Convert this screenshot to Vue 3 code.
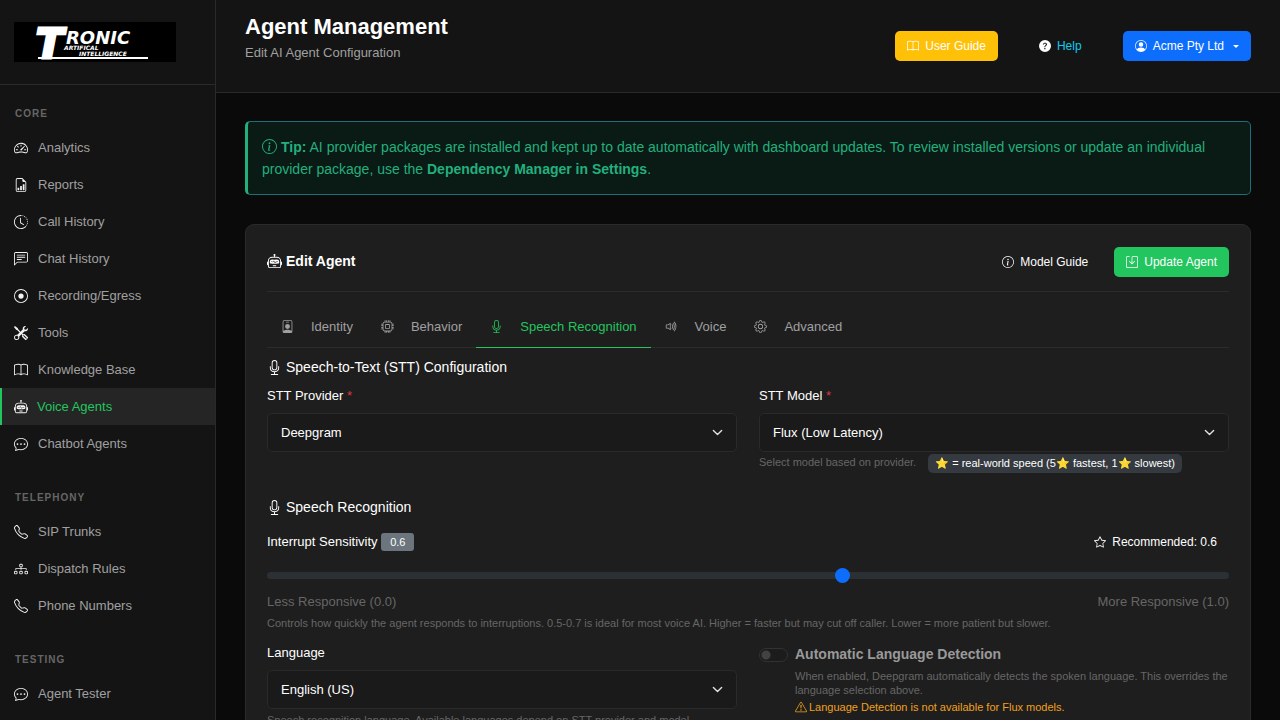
<template>
      <div class="layout">
            <aside class="sidebar">
                  <div class="brand">
                        <svg class="logo" viewBox="0 0 162 40" role="img" aria-label="Tronic Artifical Intelligence">
                              <rect width="162" height="40" fill="#000" />
                              <text class="logo-initial" x="22" y="36">T</text>
                              <text class="logo-name" x="52" y="22">RONIC</text>
                              <text class="logo-small" x="50" y="28">ARTIFICAL</text>
                              <text class="logo-small" x="65" y="34">INTELLIGENCE</text>
                              <rect x="24" y="35" width="110" height="2" fill="#fff" />
                        </svg>
                  </div>
                  <nav class="nav">
                        <div class="nav-group" v-for="group in groups" :key="group.title">
                              <div class="nav-title">{{ group.title }}</div>
                              <a class="nav-link" href="#" v-for="item in group.items" :key="item.label"
                                    :class="{ active: item.label === activePage }" @click.prevent="activePage = item.label">
                                    <svg class="icon nav-icon" viewBox="0 0 16 16"><path :d="icons[item.icon]" fill-rule="evenodd" /></svg>
                                    <span>{{ item.label }}</span>
                              </a>
                        </div>
                  </nav>
            </aside>

            <div class="main">
                  <header class="topbar">
                        <div>
                              <h1 class="page-title">Agent Management</h1>
                              <div class="page-subtitle">Edit AI Agent Configuration</div>
                        </div>
                        <div class="topbar-actions">
                              <a href="#" class="btn btn-warning">
                                    <svg class="icon" viewBox="0 0 16 16"><path :d="icons.book" fill-rule="evenodd" /></svg>User Guide
                              </a>
                              <a href="#" class="btn btn-help">
                                    <svg class="icon" viewBox="0 0 16 16"><path :d="icons.question" /></svg>Help
                              </a>
                              <button type="button" class="btn btn-primary">
                                    <svg class="icon" viewBox="0 0 16 16"><path :d="icons.person" fill-rule="evenodd" /></svg>Acme Pty Ltd
                                    <span class="caret"></span>
                              </button>
                        </div>
                  </header>

                  <main class="content">
                        <div class="alert">
                              <svg class="icon alert-icon" viewBox="0 0 16 16"><path :d="icons.info" /></svg>
                              <strong>Tip:</strong> AI provider packages are installed and kept up to date automatically with dashboard updates. To review installed versions or update an individual provider package, use the <strong>Dependency Manager in Settings</strong>.
                        </div>

                        <section class="card">
                              <div class="card-header">
                                    <h2 class="card-title">
                                          <svg class="icon" viewBox="0 0 16 16"><path :d="icons.robot" fill-rule="evenodd" /></svg>Edit Agent
                                    </h2>
                                    <div class="card-actions">
                                          <button type="button" class="btn">
                                                <svg class="icon" viewBox="0 0 16 16"><path :d="icons.info" /></svg>Model Guide
                                          </button>
                                          <button type="button" class="btn btn-success">
                                                <svg class="icon" viewBox="0 0 16 16"><path :d="icons.save" /></svg>Update Agent
                                          </button>
                                    </div>
                              </div>

                              <div class="tabs">
                                    <button type="button" class="tab" v-for="tab in tabs" :key="tab.label"
                                          :class="{ active: tab.label === activeTab }" @click="activeTab = tab.label">
                                          <svg class="icon" viewBox="0 0 16 16"><path :d="icons[tab.icon]" fill-rule="evenodd" /></svg>{{ tab.label }}
                                    </button>
                              </div>

                              <h3 class="section-title">
                                    <svg class="icon" viewBox="0 0 16 16"><path :d="icons.mic" /></svg>Speech-to-Text (STT) Configuration
                              </h3>
                              <div class="row">
                                    <div>
                                          <label class="label" for="provider">STT Provider <span class="required">*</span></label>
                                          <select id="provider" class="select" v-model="provider">
                                                <option>Deepgram</option>
                                          </select>
                                    </div>
                                    <div>
                                          <label class="label" for="model">STT Model <span class="required">*</span></label>
                                          <select id="model" class="select" v-model="model">
                                                <option>Flux (Low Latency)</option>
                                          </select>
                                          <div class="model-hint">
                                                <span>Select model based on provider.</span>
                                                <span class="speed-badge">⭐ = real-world speed (5⭐ fastest, 1⭐ slowest)</span>
                                          </div>
                                    </div>
                              </div>

                              <h3 class="section-title spaced">
                                    <svg class="icon" viewBox="0 0 16 16"><path :d="icons.mic" /></svg>Speech Recognition
                              </h3>
                              <div class="sensitivity">
                                    <label for="sensitivity">Interrupt Sensitivity <span class="value-badge">{{ sensitivity }}</span></label>
                                    <button type="button" class="btn" @click="sensitivity = 0.6">
                                          <svg class="icon" viewBox="0 0 16 16"><path :d="icons.star" /></svg>Recommended: 0.6
                                    </button>
                              </div>
                              <input id="sensitivity" class="range" type="range" min="0" max="1" step="0.1" v-model="sensitivity">
                              <div class="range-labels">
                                    <span>Less Responsive (0.0)</span>
                                    <span>More Responsive (1.0)</span>
                              </div>
                              <div class="hint">Controls how quickly the agent responds to interruptions. 0.5-0.7 is ideal for most voice AI. Higher = faster but may cut off caller. Lower = more patient but slower.</div>

                              <div class="row language-row">
                                    <div>
                                          <label class="label" for="language">Language</label>
                                          <select id="language" class="select" v-model="language">
                                                <option>English (US)</option>
                                          </select>
                                          <div class="hint">Speech recognition language. Available languages depend on STT provider and model.</div>
                                    </div>
                                    <div class="detection">
                                          <input id="detection" class="switch" type="checkbox" disabled>
                                          <div>
                                                <label class="detection-label" for="detection">Automatic Language Detection</label>
                                                <div class="detection-hint">When enabled, Deepgram automatically detects the spoken language. This overrides the language selection above.</div>
                                                <div class="detection-warning">
                                                      <svg class="icon" viewBox="0 0 16 16"><path :d="icons.warning" /></svg>Language Detection is not available for Flux models.
                                                </div>
                                          </div>
                                    </div>
                              </div>
                        </section>
                  </main>
            </div>
      </div>
</template>

<script setup>
import { ref } from 'vue';

const icons = {
      speedometer: 'M8 4a.5.5 0 0 1 .5.5V6a.5.5 0 0 1-1 0V4.5A.5.5 0 0 1 8 4M3.732 5.732a.5.5 0 0 1 .707 0l.915.914a.5.5 0 1 1-.708.708l-.914-.915a.5.5 0 0 1 0-.707M2 10a.5.5 0 0 1 .5-.5h1.586a.5.5 0 0 1 0 1H2.5A.5.5 0 0 1 2 10m9.5 0a.5.5 0 0 1 .5-.5h1.5a.5.5 0 0 1 0 1H12a.5.5 0 0 1-.5-.5m.754-4.246a.39.39 0 0 0-.527-.02L7.547 9.31a.91.91 0 1 0 1.302 1.258l3.434-4.297a.39.39 0 0 0-.029-.518zM0 10a8 8 0 1 1 15.547 2.661c-.442 1.253-1.845 1.602-2.932 1.25C11.309 13.488 9.475 13 8 13c-1.474 0-3.31.488-4.615.911-1.087.352-2.49.003-2.932-1.25A8 8 0 0 1 0 10m8-7a7 7 0 0 0-6.603 9.329c.203.575.923.876 1.68.63C4.397 12.533 6.358 12 8 12s3.604.532 4.923.96c.757.245 1.477-.056 1.68-.631A7 7 0 0 0 8 3',
      report: 'M10 13.5a.5.5 0 0 0 .5.5h1a.5.5 0 0 0 .5-.5v-6a.5.5 0 0 0-.5-.5h-1a.5.5 0 0 0-.5.5zm-2.5.5a.5.5 0 0 1-.5-.5v-4a.5.5 0 0 1 .5-.5h1a.5.5 0 0 1 .5.5v4a.5.5 0 0 1-.5.5zm-3 0a.5.5 0 0 1-.5-.5v-2a.5.5 0 0 1 .5-.5h1a.5.5 0 0 1 .5.5v2a.5.5 0 0 1-.5.5zM14 14V4.5L9.5 0H4a2 2 0 0 0-2 2v12a2 2 0 0 0 2 2h8a2 2 0 0 0 2-2M9.5 3A1.5 1.5 0 0 0 11 4.5h2V14a1 1 0 0 1-1 1H4a1 1 0 0 1-1-1V2a1 1 0 0 1 1-1h5.500z',
      history: 'M8.515 1.019A7 7 0 0 0 8 1V0a8 8 0 0 1 .589.022zm2.004.45a7 7 0 0 0-.985-.299l.219-.976q.576.129 1.126.342zm1.37.71a7 7 0 0 0-.439-.27l.493-.87a8 8 0 0 1 .979.654l-.615.789a7 7 0 0 0-.418-.302zm1.834 1.79a7 7 0 0 0-.653-.796l.724-.69q.406.429.747.91zm.744 1.352a7 7 0 0 0-.214-.468l.893-.45a8 8 0 0 1 .45 1.088l-.95.313a7 7 0 0 0-.179-.483m.53 2.507a7 7 0 0 0-.1-1.025l.985-.17q.1.58.116 1.17zm-.131 1.538q.05-.254.081-.51l.993.123a8 8 0 0 1-.23 1.155l-.964-.267q.069-.247.12-.501m-.952 2.379q.276-.436.486-.908l.914.405q-.24.54-.555 1.038zm-.964 1.205q.183-.183.35-.378l.758.653a8 8 0 0 1-.401.432zM8 1a7 7 0 1 0 4.95 11.95l.707.707A8.001 8.001 0 1 1 8 0zM7.5 3a.5.5 0 0 1 .5.5v5.210l3.248 1.856a.5.5 0 0 1-.496.868l-3.500-2A.5.5 0 0 1 7 9V3.500a.5.5 0 0 1 .5-.5',
      chatText: 'M14 1a1 1 0 0 1 1 1v8a1 1 0 0 1-1 1H4.414A2 2 0 0 0 3 11.586l-2 2V2a1 1 0 0 1 1-1zM2 0a2 2 0 0 0-2 2v12.793a.5.5 0 0 0 .854.353l2.853-2.853A1 1 0 0 1 4.414 12H14a2 2 0 0 0 2-2V2a2 2 0 0 0-2-2zM3 3.500a.5.5 0 0 1 .5-.5h9a.5.5 0 0 1 0 1h-9a.5.5 0 0 1-.5-.5M3 6a.5.5 0 0 1 .5-.5h9a.5.5 0 0 1 0 1h-9A.5.5 0 0 1 3 6m0 2.500a.5.5 0 0 1 .5-.5h5a.5.5 0 0 1 0 1h-5a.5.5 0 0 1-.5-.5',
      record: 'M8 15A7 7 0 1 1 8 1a7 7 0 0 1 0 14m0 1A8 8 0 1 0 8 0a8 8 0 0 0 0 16M11 8a3 3 0 1 1-6 0 3 3 0 0 1 6 0',
      tools: 'M1 0 0 1l2.200 3.081a1 1 0 0 0 .815.419h.07a1 1 0 0 1 .708.293l2.675 2.675-2.617 2.654A3.003 3.003 0 0 0 0 13a3 3 0 1 0 5.878-.851l2.654-2.617.968.968-.305.914a1 1 0 0 0 .242 1.023l3.270 3.270a.997.997 0 0 0 1.414 0l1.586-1.586a.997.997 0 0 0 0-1.414l-3.270-3.270a1 1 0 0 0-1.023-.242L10.500 9.500l-.96-.96 2.680-2.643A3.005 3.005 0 0 0 16 3q0-.405-.102-.777l-2.140 2.141L12 4l-.364-1.757L13.777.102a3 3 0 0 0-3.675 3.680L7.462 6.460 4.793 3.793a1 1 0 0 1-.293-.707v-.071a1 1 0 0 0-.419-.814zm9.646 10.646a.5.5 0 0 1 .708 0l2.914 2.915a.5.5 0 0 1-.707.707l-2.915-2.914a.5.5 0 0 1 0-.708M3 11l.471.242.529.026.287.445.445.287.026.529L5 13l-.242.471-.026.529-.445.287-.287.445-.529.026L3 15l-.471-.242L2 14.732l-.287-.445L1.268 14l-.026-.529L1 13l.242-.471.026-.529.445-.287.287-.445.529-.026z',
      book: 'M1 2.828c.885-.37 2.154-.769 3.388-.893 1.330-.134 2.458.063 3.112.752v9.746c-.935-.53-2.120-.603-3.213-.493-1.180.12-2.370.461-3.287.811zm7.500-.141c.654-.689 1.782-.886 3.112-.752 1.234.124 2.503.523 3.388.893v9.923c-.918-.35-2.107-.692-3.287-.81-1.094-.111-2.278-.039-3.213.492zM8 1.783C7.015.936 5.587.810 4.287.940c-1.514.153-3.042.672-3.994 1.105A.5.5 0 0 0 0 2.500v11a.5.5 0 0 0 .707.455c.882-.4 2.303-.881 3.680-1.020 1.409-.142 2.590.087 3.223.877a.5.5 0 0 0 .78 0c.633-.79 1.814-1.019 3.222-.877 1.378.139 2.800.620 3.681 1.020A.5.5 0 0 0 16 13.500v-11a.5.5 0 0 0-.293-.455c-.952-.433-2.480-.952-3.994-1.105C10.413.809 8.985.936 8 1.783',
      robot: 'M6 12.500a.5.5 0 0 1 .5-.5h3a.5.5 0 0 1 0 1h-3a.5.5 0 0 1-.5-.5M3 8.062C3 6.760 4.235 5.765 5.530 5.886a26.600 26.600 0 0 0 4.940 0C11.765 5.765 13 6.760 13 8.062v1.157a.93.93 0 0 1-.765.935c-.845.147-2.340.346-4.235.346s-3.390-.2-4.235-.346A.93.93 0 0 1 3 9.219zm4.542-.827a.25.25 0 0 0-.217.068l-.92.900a25 25 0 0 1-1.871-.183.25.25 0 0 0-.068.495c.55.076 1.232.149 2.020.193a.25.25 0 0 0 .189-.071l.754-.736.847 1.710a.25.25 0 0 0 .404.062l.932-.970a25 25 0 0 0 1.922-.188.25.25 0 0 0-.068-.495c-.538.074-1.207.145-1.980.189a.25.25 0 0 0-.166.076l-.754.785-.842-1.700a.25.25 0 0 0-.182-.135M8.500 1.866a1 1 0 1 0-1 0V3h-2A4.500 4.500 0 0 0 1 7.500V8a1 1 0 0 0-1 1v2a1 1 0 0 0 1 1v1a2 2 0 0 0 2 2h10a2 2 0 0 0 2-2v-1a1 1 0 0 0 1-1V9a1 1 0 0 0-1-1v-.5A4.500 4.500 0 0 0 10.500 3h-2zM14 7.500V13a1 1 0 0 1-1 1H3a1 1 0 0 1-1-1V7.500A3.500 3.500 0 0 1 5.500 4h5A3.500 3.500 0 0 1 14 7.500',
      chatDots: 'M5 8a1 1 0 1 1-2 0 1 1 0 0 1 2 0m4 0a1 1 0 1 1-2 0 1 1 0 0 1 2 0m3 1a1 1 0 1 0 0-2 1 1 0 0 0 0 2M2.165 15.803l.02-.004c1.830-.363 2.948-.842 3.468-1.105A9 9 0 0 0 8 15c4.418 0 8-3.134 8-7s-3.582-7-8-7-8 3.134-8 7c0 1.760.743 3.370 1.970 4.600a10.400 10.400 0 0 1-.524 2.318l-.003.011a11 11 0 0 1-.244.637c-.079.186.074.394.273.362a22 22 0 0 0 .693-.125m.8-3.108a1 1 0 0 0-.287-.801C1.618 10.830 1 9.468 1 8c0-3.192 3.004-6 7-6s7 2.808 7 6-3.004 6-7 6a8 8 0 0 1-2.088-.272 1 1 0 0 0-.711.074c-.387.196-1.240.570-2.634.893a11 11 0 0 0 .398-2',
      phone: 'M3.654 1.328a.678.678 0 0 0-1.015-.063L1.605 2.300c-.483.484-.661 1.169-.45 1.770a17.600 17.600 0 0 0 4.168 6.608 17.600 17.600 0 0 0 6.608 4.168c.601.211 1.286.033 1.770-.450l1.034-1.034a.678.678 0 0 0-.063-1.015l-2.307-1.794a.68.68 0 0 0-.580-.122l-2.190.547a1.750 1.750 0 0 1-1.657-.459L5.482 8.062a1.750 1.750 0 0 1-.460-1.657l.548-2.190a.68.68 0 0 0-.122-.580zM1.884.511a1.745 1.745 0 0 1 2.612.163L6.290 2.980c.329.423.445.974.315 1.494l-.547 2.190a.68.68 0 0 0 .178.643l2.457 2.457a.68.68 0 0 0 .644.178l2.189-.547a1.750 1.750 0 0 1 1.494.315l2.306 1.794c.829.645.905 1.870.163 2.611l-1.034 1.034c-.740.740-1.846 1.065-2.877.702a18.600 18.600 0 0 1-7.010-4.420 18.600 18.600 0 0 1-4.420-7.009c-.362-1.030-.037-2.137.703-2.877z',
      diagram: 'M6 3.500A1.500 1.500 0 0 1 7.500 2h1A1.500 1.500 0 0 1 10 3.500v1A1.500 1.500 0 0 1 8.500 6v1H14a.5.5 0 0 1 .5.5v1a.5.5 0 0 1-1 0V8h-5v.5a.5.5 0 0 1-1 0V8h-5v.5a.5.5 0 0 1-1 0v-1A.5.5 0 0 1 2 7h5.500V6A1.500 1.500 0 0 1 6 4.500zM8.500 5a.5.5 0 0 0 .5-.5v-1a.5.5 0 0 0-.5-.5h-1a.5.5 0 0 0-.5.5v1a.5.5 0 0 0 .5.5zM0 11.500A1.500 1.500 0 0 1 1.500 10h1A1.500 1.500 0 0 1 4 11.500v1A1.500 1.500 0 0 1 2.500 14h-1A1.500 1.500 0 0 1 0 12.500zm1.500-.5a.5.5 0 0 0-.5.5v1a.5.5 0 0 0 .5.5h1a.5.5 0 0 0 .5-.5v-1a.5.5 0 0 0-.5-.5zm4.500.5A1.500 1.500 0 0 1 7.500 10h1a1.500 1.500 0 0 1 1.500 1.500v1A1.500 1.500 0 0 1 8.500 14h-1A1.500 1.500 0 0 1 6 12.500zm1.500-.5a.5.5 0 0 0-.5.5v1a.5.5 0 0 0 .5.5h1a.5.5 0 0 0 .5-.5v-1a.5.5 0 0 0-.5-.5zm4.500.5a1.500 1.500 0 0 1 1.500-1.500h1a1.500 1.500 0 0 1 1.500 1.500v1a1.500 1.500 0 0 1-1.500 1.500h-1a1.500 1.500 0 0 1-1.500-1.500zm1.500-.5a.5.5 0 0 0-.5.5v1a.5.5 0 0 0 .5.5h1a.5.5 0 0 0 .5-.5v-1a.5.5 0 0 0-.5-.5z',
      question: 'M16 8A8 8 0 1 1 0 8a8 8 0 0 1 16 0M5.496 6.033h.825c.138 0 .248-.113.266-.25.09-.656.54-1.134 1.342-1.134.686 0 1.314.343 1.314 1.168 0 .635-.374.927-.965 1.371-.673.489-1.206 1.060-1.168 1.987l.003.217a.25.25 0 0 0 .25.246h.811a.25.25 0 0 0 .25-.25v-.105c0-.718.273-.927 1.010-1.486.609-.463 1.244-.977 1.244-2.056 0-1.511-1.276-2.241-2.673-2.241-1.267 0-2.655.590-2.750 2.286a.237.237 0 0 0 .241.247m2.325 6.443c.610 0 1.029-.394 1.029-.927 0-.552-.420-.940-1.029-.940-.584 0-1.009.388-1.009.940 0 .533.425.927 1.010.927z',
      person: 'M11 6a3 3 0 1 1-6 0 3 3 0 0 1 6 0M0 8a8 8 0 1 1 16 0A8 8 0 0 1 0 8m8-7a7 7 0 0 0-5.468 11.370C3.242 11.226 4.805 10 8 10s4.757 1.225 5.468 2.370A7 7 0 0 0 8 1',
      info: 'M8 15A7 7 0 1 1 8 1a7 7 0 0 1 0 14m0 1A8 8 0 1 0 8 0a8 8 0 0 0 0 16M8.930 6.588l-2.290.287-.082.380.450.083c.294.070.352.176.288.469l-.738 3.468c-.194.897.105 1.319.808 1.319.545 0 1.178-.252 1.465-.598l.088-.416c-.2.176-.492.246-.686.246-.275 0-.375-.193-.304-.533zM9 4.500a1 1 0 1 1-2 0 1 1 0 0 1 2 0',
      save: 'M2 1a1 1 0 0 0-1 1v12a1 1 0 0 0 1 1h12a1 1 0 0 0 1-1V2a1 1 0 0 0-1-1H9.500a1 1 0 0 0-1 1v7.293l2.646-2.647a.5.5 0 0 1 .708.708l-3.500 3.500a.5.5 0 0 1-.708 0l-3.500-3.500a.5.5 0 1 1 .708-.708L7.500 9.293V2a2 2 0 0 1 2-2H14a2 2 0 0 1 2 2v12a2 2 0 0 1-2 2H2a2 2 0 0 1-2-2V2a2 2 0 0 1 2-2h2.500a.5.5 0 0 1 0 1z',
      badge: 'M6.500 2a.5.5 0 0 0 0 1h3a.5.5 0 0 0 0-1zM11 8a3 3 0 1 1-6 0 3 3 0 0 1 6 0M4.500 0A2.500 2.500 0 0 0 2 2.500V14a2 2 0 0 0 2 2h8a2 2 0 0 0 2-2V2.500A2.500 2.500 0 0 0 11.500 0zM3 2.500A1.500 1.500 0 0 1 4.500 1h7A1.500 1.500 0 0 1 13 2.500v10.795a4.200 4.200 0 0 0-.776-.492C11.392 12.387 10.063 12 8 12s-3.392.387-4.224.803a4.200 4.200 0 0 0-.776.492z',
      cpu: 'M5 0a.5.5 0 0 1 .5.5V2h1V.5a.5.5 0 0 1 1 0V2h1V.5a.5.5 0 0 1 1 0V2h1V.5a.5.5 0 0 1 1 0V2A2.500 2.500 0 0 1 14 4.500h1.500a.5.5 0 0 1 0 1H14v1h1.500a.5.5 0 0 1 0 1H14v1h1.500a.5.5 0 0 1 0 1H14v1h1.500a.5.5 0 0 1 0 1H14a2.500 2.500 0 0 1-2.500 2.500v1.500a.5.5 0 0 1-1 0V14h-1v1.500a.5.5 0 0 1-1 0V14h-1v1.500a.5.5 0 0 1-1 0V14h-1v1.500a.5.5 0 0 1-1 0V14A2.500 2.500 0 0 1 2 11.500H.5a.5.5 0 0 1 0-1H2v-1H.5a.5.5 0 0 1 0-1H2v-1H.5a.5.5 0 0 1 0-1H2v-1H.5a.5.5 0 0 1 0-1H2A2.500 2.500 0 0 1 4.500 2V.5A.5.5 0 0 1 5 0m-.5 3A1.500 1.500 0 0 0 3 4.500v7A1.500 1.500 0 0 0 4.500 13h7a1.500 1.500 0 0 0 1.500-1.500v-7A1.500 1.500 0 0 0 11.500 3zM5 6.500A1.500 1.500 0 0 1 6.500 5h3A1.500 1.500 0 0 1 11 6.500v3A1.500 1.500 0 0 1 9.500 11h-3A1.500 1.500 0 0 1 5 9.500zM6.500 6a.5.5 0 0 0-.5.5v3a.5.5 0 0 0 .5.5h3a.5.5 0 0 0 .5-.5v-3a.5.5 0 0 0-.5-.5z',
      mic: 'M3.500 6.500A.5.5 0 0 1 4 7v1a4 4 0 0 0 8 0V7a.5.5 0 0 1 1 0v1a5 5 0 0 1-4.500 4.975V15h3a.5.5 0 0 1 0 1h-7a.5.5 0 0 1 0-1h3v-2.025A5 5 0 0 1 3 8V7a.5.5 0 0 1 .5-.5M10 8a2 2 0 1 1-4 0V3a2 2 0 1 1 4 0zM8 0a3 3 0 0 0-3 3v5a3 3 0 0 0 6 0V3a3 3 0 0 0-3-3',
      volume: 'M11.536 14.010A8.470 8.470 0 0 0 14.026 8a8.470 8.470 0 0 0-2.490-6.010l-.708.707A7.480 7.480 0 0 1 13.025 8c0 2.071-.840 3.946-2.197 5.303zM10.121 12.596A6.480 6.480 0 0 0 12.025 8a6.480 6.480 0 0 0-1.904-4.596l-.707.707A5.480 5.480 0 0 1 11.025 8a5.480 5.480 0 0 1-1.610 3.890zM10.025 8a4.500 4.500 0 0 1-1.318 3.182L8 10.475A3.500 3.500 0 0 0 9.025 8c0-.966-.392-1.841-1.025-2.475l.707-.707A4.500 4.500 0 0 1 10.025 8M7 4a.5.5 0 0 0-.812-.39L3.825 5.500H1.500A.5.5 0 0 0 1 6v4a.5.5 0 0 0 .5.5h2.325l2.363 1.890A.5.5 0 0 0 7 12zM4.312 6.390 6 5.040v5.920L4.312 9.610A.5.5 0 0 0 4 9.500H2v-3h2a.5.5 0 0 0 .312-.11',
      gear: 'M8 4.754a3.246 3.246 0 1 0 0 6.492 3.246 3.246 0 0 0 0-6.492M5.754 8a2.246 2.246 0 1 1 4.492 0 2.246 2.246 0 0 1-4.492 0M9.796 1.343c-.527-1.790-3.065-1.790-3.592 0l-.094.319a.873.873 0 0 1-1.255.520l-.292-.160c-1.640-.892-3.433.902-2.540 2.541l.159.292a.873.873 0 0 1-.520 1.255l-.319.094c-1.790.527-1.790 3.065 0 3.592l.319.094a.873.873 0 0 1 .520 1.255l-.160.292c-.892 1.640.901 3.434 2.541 2.540l.292-.159a.873.873 0 0 1 1.255.520l.094.319c.527 1.790 3.065 1.790 3.592 0l.094-.319a.873.873 0 0 1 1.255-.520l.292.160c1.640.893 3.434-.902 2.540-2.541l-.159-.292a.873.873 0 0 1 .520-1.255l.319-.094c1.790-.527 1.790-3.065 0-3.592l-.319-.094a.873.873 0 0 1-.520-1.255l.160-.292c.893-1.640-.902-3.433-2.541-2.540l-.292.159a.873.873 0 0 1-1.255-.520zm-2.633.283c.246-.835 1.428-.835 1.674 0l.094.319a1.873 1.873 0 0 0 2.693 1.115l.291-.160c.764-.415 1.600.420 1.184 1.185l-.159.292a1.873 1.873 0 0 0 1.116 2.692l.318.094c.835.246.835 1.428 0 1.674l-.319.094a1.873 1.873 0 0 0-1.115 2.693l.160.291c.415.764-.420 1.600-1.185 1.184l-.291-.159a1.873 1.873 0 0 0-2.693 1.116l-.094.318c-.246.835-1.428.835-1.674 0l-.094-.319a1.873 1.873 0 0 0-2.692-1.115l-.292.160c-.764.415-1.600-.420-1.184-1.185l.159-.291A1.873 1.873 0 0 0 1.945 8.930l-.319-.094c-.835-.246-.835-1.428 0-1.674l.319-.094A1.873 1.873 0 0 0 3.060 4.377l-.160-.292c-.415-.764.420-1.600 1.185-1.184l.292.159a1.873 1.873 0 0 0 2.692-1.115z',
      star: 'M2.866 14.850c-.078.444.360.791.746.593l4.390-2.256 4.389 2.256c.386.198.824-.149.746-.592l-.830-4.730 3.522-3.356c.330-.314.160-.888-.282-.950l-4.898-.696L8.465.792a.513.513 0 0 0-.927 0L5.354 5.120l-4.898.696c-.441.062-.612.636-.283.950l3.523 3.356-.830 4.730zm4.905-2.767-3.686 1.894.694-3.957a.56.56 0 0 0-.163-.505L1.710 6.745l4.052-.576a.53.53 0 0 0 .393-.288L8 2.223l1.847 3.658a.53.53 0 0 0 .393.288l4.052.575-2.906 2.770a.56.56 0 0 0-.163.506l.694 3.957-3.686-1.894a.5.5 0 0 0-.461 0z',
      warning: 'M7.938 2.016A.13.13 0 0 1 8.002 2a.13.13 0 0 1 .063.016.15.15 0 0 1 .054.057l6.857 11.667c.036.060.035.124.002.183a.2.2 0 0 1-.054.060.1.1 0 0 1-.066.017H1.146a.1.1 0 0 1-.066-.017.2.2 0 0 1-.054-.060.18.18 0 0 1 .002-.183L7.884 2.073a.15.15 0 0 1 .054-.057m1.044-.450a1.130 1.130 0 0 0-1.960 0L.165 13.233c-.457.778.091 1.767.980 1.767h13.713c.889 0 1.438-.990.980-1.767zM7.002 12a1 1 0 1 1 2 0 1 1 0 0 1-2 0M7.100 5.995a.905.905 0 1 1 1.800 0l-.350 3.507a.552.552 0 0 1-1.100 0z'
}

const groups = [
      {
            title: 'CORE',
            items: [
                  { label: 'Analytics', icon: 'speedometer' },
                  { label: 'Reports', icon: 'report' },
                  { label: 'Call History', icon: 'history' },
                  { label: 'Chat History', icon: 'chatText' },
                  { label: 'Recording/Egress', icon: 'record' },
                  { label: 'Tools', icon: 'tools' },
                  { label: 'Knowledge Base', icon: 'book' },
                  { label: 'Voice Agents', icon: 'robot' },
                  { label: 'Chatbot Agents', icon: 'chatDots' }
            ]
      },
      {
            title: 'TELEPHONY',
            items: [
                  { label: 'SIP Trunks', icon: 'phone' },
                  { label: 'Dispatch Rules', icon: 'diagram' },
                  { label: 'Phone Numbers', icon: 'phone' }
            ]
      },
      {
            title: 'TESTING',
            items: [
                  { label: 'Agent Tester', icon: 'chatDots' }
            ]
      }
]

const tabs = [
      { label: 'Identity', icon: 'badge' },
      { label: 'Behavior', icon: 'cpu' },
      { label: 'Speech Recognition', icon: 'mic' },
      { label: 'Voice', icon: 'volume' },
      { label: 'Advanced', icon: 'gear' }
]

const activePage = ref('Voice Agents')
const activeTab = ref('Speech Recognition')

const provider = ref('Deepgram')
const model = ref('Flux (Low Latency)')
const language = ref('English (US)')
const sensitivity = ref(0.6)
</script>

<style>
body {
      background: #0a0a0a;
}
</style>

<style scoped>
* {
      box-sizing: border-box;
}

.layout {
      display: flex;
      height: 100vh;
      background: #0a0a0a;
      color: #fff;
      font-family: "Liberation Sans", Arial, sans-serif;
      font-size: 13px;
}

button,
select {
      font-family: inherit;
}

a {
      text-decoration: none;
}

.icon {
      width: 12px;
      height: 12px;
      flex: none;
      fill: currentColor;
}

/* sidebar */
.sidebar {
      flex: 0 0 216px;
      background: #141414;
      border-right: 1px solid #2a2a2a;
      overflow-y: auto;
      scrollbar-width: none;
}

.brand {
      padding: 22px 14px;
      border-bottom: 1px solid #2a2a2a;
}

.logo {
      display: block;
      width: 162px;
      height: 40px;
}

.logo text {
      fill: #fff;
      font-family: "DejaVu Sans", sans-serif;
      font-weight: bold;
      font-style: italic;
}

.logo .logo-initial {
      font-size: 40px;
      stroke: #fff;
      stroke-width: 3px;
}

.logo .logo-name {
      font-size: 18px;
}

.logo .logo-small {
      font-size: 6px;
}

.nav {
      padding-top: 14px;
}

.nav-group {
      margin-bottom: 21px;
}

.nav-title {
      padding: 0 15px;
      line-height: 30px;
      font-size: 10px;
      font-weight: bold;
      letter-spacing: 1px;
      color: #666;
}

.nav-link {
      display: flex;
      align-items: center;
      gap: 10px;
      height: 37px;
      padding: 0 14px;
      color: #a0a0a0;
}

.nav-icon {
      width: 14px;
      height: 14px;
      color: #f4f4f4;
}

.nav-link.active {
      gap: 9px;
      padding-left: 12px;
      border-left: 2px solid #22c55e;
      background: #252525;
      color: #22c55e;
}

/* top bar */
.main {
      flex: 1;
      min-width: 0;
      display: flex;
      flex-direction: column;
}

.topbar {
      display: flex;
      justify-content: space-between;
      padding: 14px 29px 30px;
      background: #141414;
      border-bottom: 1px solid #2a2a2a;
}

.page-title {
      margin: 0;
      font-size: 22px;
      line-height: 26px;
}

.page-subtitle {
      margin-top: 4px;
      line-height: 18px;
      color: #a0a0a0;
}

.topbar-actions {
      display: flex;
      align-items: center;
      gap: 29px;
      padding-top: 16px;
}

.btn {
      display: inline-flex;
      align-items: center;
      gap: 6px;
      height: 30px;
      padding: 0 12px;
      border: 0;
      border-radius: 5px;
      background: transparent;
      color: #fff;
      font-size: 12px;
      white-space: nowrap;
}

.btn-warning {
      background: #ffc107;
}

.btn-help {
      color: #0dcaf0;
}

.btn-help .icon {
      color: #fff;
}

.btn-primary {
      background: #0d6efd;
}

.btn-success {
      background: #22c55e;
}

.caret {
      margin-left: 3px;
      border: 3px solid transparent;
      border-top-color: #fff;
      border-bottom: 0;
}

/* content */
.content {
      flex: 1;
      min-height: 0;
      padding: 28px 29px;
      overflow-y: auto;
      scrollbar-width: none;
}

.alert {
      margin-bottom: 29px;
      padding: 14px;
      border: 1px solid #1b6f78;
      border-left: 3px solid #22b07d;
      border-radius: 5px;
      background: #0a1a15;
      color: #22b07d;
      font-size: 14px;
      line-height: 22px;
}

.alert-icon {
      width: 15px;
      height: 15px;
      margin-right: 4px;
      vertical-align: -2px;
}

.card {
      padding: 22px 21px;
      border: 1px solid #2a2a2a;
      border-radius: 9px;
      background: #1e1e1e;
}

.card-header {
      display: flex;
      justify-content: space-between;
      padding-bottom: 14px;
      border-bottom: 1px solid #2c2c2c;
}

.card-title {
      display: flex;
      align-items: center;
      gap: 4px;
      height: 28px;
      margin: 0;
      font-size: 14px;
}

.card-title .icon,
.section-title .icon {
      width: 15px;
      height: 15px;
}

.card-actions {
      display: flex;
      gap: 14px;
}

.tabs {
      display: flex;
      margin-top: 14px;
      border-bottom: 1px solid #2c2c2c;
}

.tab {
      display: flex;
      align-items: center;
      gap: 17px;
      height: 42px;
      margin-bottom: -1px;
      padding: 0 14px;
      border: 0;
      border-bottom: 1px solid transparent;
      background: none;
      color: #a0a0a0;
      font-size: 13px;
}

.tab .icon {
      width: 13px;
      height: 13px;
}

.tab.active {
      border-bottom-color: #22c55e;
      color: #22c55e;
}

.section-title {
      display: flex;
      align-items: center;
      gap: 4px;
      margin: 10px 0;
      font-size: 14px;
      font-weight: normal;
      line-height: 18px;
}

.section-title.spaced {
      margin: 25px 0 11px;
}

.row {
      display: grid;
      grid-template-columns: 1fr 1fr;
      gap: 22px;
}

.label {
      display: block;
      margin-bottom: 7px;
      line-height: 20px;
}

.required {
      color: #dc3545;
}

.select {
      display: block;
      width: 100%;
      height: 39px;
      padding: 0 13px;
      border: 1px solid #2a2a2a;
      border-radius: 5px;
      appearance: none;
      background: #1a1a1a url("data:image/svg+xml,%3Csvg xmlns='http://www.w3.org/2000/svg' viewBox='0 0 16 16'%3E%3Cpath fill='none' stroke='%23dee2e6' stroke-linecap='round' stroke-linejoin='round' stroke-width='2' d='m2 5 6 6 6-6'/%3E%3C/svg%3E") no-repeat right 13px center / 11px;
      color: #fff;
      font-size: 13px;
}

.hint,
.model-hint {
      margin-top: 3px;
      color: #666;
      font-size: 11px;
      line-height: 16px;
}

.model-hint {
      display: flex;
      align-items: flex-start;
      gap: 12px;
      margin-top: 2px;
}

.speed-badge {
      padding: 0 7px;
      border-radius: 5px;
      background: #343a40;
      color: #fff;
      line-height: 19px;
}

.sensitivity {
      display: flex;
      align-items: center;
      justify-content: space-between;
}

.value-badge {
      display: inline-block;
      padding: 0 9px;
      border-radius: 3px;
      background: #6c757d;
      font-size: 11px;
      line-height: 18px;
}

.range {
      display: block;
      width: 100%;
      height: 21px;
      margin: 8px 0 6px;
      appearance: none;
      background: transparent;
}

.range::-webkit-slider-runnable-track {
      height: 7px;
      border-radius: 7px;
      background: #2b3035;
}

.range::-webkit-slider-thumb {
      appearance: none;
      width: 15px;
      height: 15px;
      margin-top: -4px;
      border-radius: 50%;
      background: #0d6efd;
}

.range-labels {
      display: flex;
      justify-content: space-between;
      color: #666;
      line-height: 20px;
}

.language-row {
      margin-top: 12px;
}

.detection {
      display: flex;
      gap: 7px;
}

.switch {
      flex: none;
      width: 29px;
      height: 14px;
      margin: 5px 0 0;
      border: 1px solid #303234;
      border-radius: 14px;
      appearance: none;
      background: radial-gradient(circle at 6px 6px, #404244 4px, #1c1c1c 5px);
}

.detection-label {
      display: block;
      color: #999;
      font-size: 14px;
      font-weight: bold;
      line-height: 22px;
}

.detection-hint {
      margin-top: 4px;
      color: #666;
      font-size: 11px;
      line-height: 14px;
}

.detection-warning {
      display: flex;
      align-items: center;
      gap: 2px;
      margin-top: 3px;
      color: #f0a01e;
      font-size: 11px;
      line-height: 14px;
}
</style>
